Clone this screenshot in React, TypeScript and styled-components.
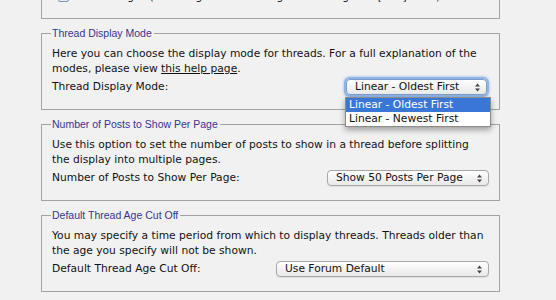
import React from "react"
import styled, { createGlobalStyle, css } from "styled-components"

const GlobalStyle = createGlobalStyle`
  html, body {
    margin: 0;
    background: #f1f1f1;
    overflow: hidden;
  }
  body {
    font-family: "DejaVu Sans", Verdana, sans-serif;
    font-size: 10.7px;
    color: #111;
  }
`

const Page = styled.div`
  width: 459px;
  padding-left: 41px;
  margin-top: -18px;
  display: flex;
  flex-direction: column;
  gap: 7px;
`

const Group = styled.fieldset`
  position: relative;
  margin: 0;
  padding: 6px 10px 14px 10px;
  border: 1px solid #a3a3a3;
  min-width: 0;
`

const Legend = styled.legend`
  font-family: "Liberation Sans", Arial, sans-serif;
  font-size: 10.5px;
  line-height: 14px;
  color: #35358f;
  padding: 0 2px 0 1px;
  margin-left: -1px;
`

const Text = styled.p`
  margin: 0;
  line-height: 15px;
`

const HelpLink = styled.a`
  color: inherit;
  text-decoration: underline;
`

const Row = styled.div`
  display: flex;
  align-items: center;
  justify-content: space-between;
  height: 18px;
  margin-top: 1px;
`

const CheckRow = styled.div`
  display: flex;
  align-items: center;
  gap: 6px;
  padding-left: 6px;
  line-height: 15px;
`

const Check = styled.span`
  width: 9px;
  height: 9px;
  border: 1px solid #7d94b4;
  border-radius: 2px;
  background: linear-gradient(#fff, #e3e9f1);
`

const SelectBox = styled.div<{ $width: number; $focused?: boolean }>`
  position: relative;
  width: ${(p) => p.$width}px;
  height: 16px;
  box-sizing: border-box;
  border: 1px solid #a8a8a8;
  border-radius: 4px;
  background: linear-gradient(#ffffff, #f3f3f3 50%, #e9e9e9);
  box-shadow: 0 1px 1px rgba(0, 0, 0, 0.08);
  display: flex;
  align-items: center;
  padding-left: 8px;
  line-height: 14px;
  margin-top: 2px;
  ${(p) =>
    p.$focused &&
    css`
      margin-right: 2px;
      border-color: #7e9cc8;
      box-shadow: 0 0 0 2px #8db5e6, 0 0 2px 3px rgba(120, 160, 220, 0.4);
    `}
`

const Arrows = styled.svg`
  position: absolute;
  right: 6px;
  top: 3px;
`

const Menu = styled.ul`
  position: absolute;
  z-index: 2;
  left: -2px;
  top: 17px;
  width: 144px;
  margin: 0;
  padding: 0;
  list-style: none;
  background: #fff;
  border: 1px solid #8c8c8c;
  box-shadow: 0 3px 6px rgba(0, 0, 0, 0.35);
`

const MenuItem = styled.li<{ $active?: boolean }>`
  height: 14px;
  line-height: 14px;
  padding-left: 3px;
  ${(p) =>
    p.$active &&
    css`
      background: #3a76d6;
      color: #fff;
    `}
`

function Select({
  value,
  width,
  focused,
  options,
}: {
  value: string
  width: number
  focused?: boolean
  options?: string[]
}) {
  return (
    <SelectBox $width={width} $focused={focused}>
      {value}
      <Arrows width="5" height="9" viewBox="0 0 5 9">
        <path d="M0 3.5 L2.5 0.5 L5 3.5 Z M0 5.5 L2.5 8.5 L5 5.5 Z" fill="#444" />
      </Arrows>
      {options && (
        <Menu>
          {options.map((o) => (
            <MenuItem key={o} $active={o === value}>
              {o}
            </MenuItem>
          ))}
        </Menu>
      )}
    </SelectBox>
  )
}

export default function App() {
  return (
    <>
      <GlobalStyle />
      <Page>
        <Group>
          <CheckRow>
            <Check />
            Show images (including attached images and images in [IMG] code)
          </CheckRow>
        </Group>

        <Group>
          <Legend>Thread Display Mode</Legend>
          <Text>
            Here you can choose the display mode for threads. For a full explanation of the
          </Text>
          <Text>
            modes, please view <HelpLink href="#">this help page</HelpLink>.
          </Text>
          <Row>
            <span>Thread Display Mode:</span>
            <Select
              value="Linear - Oldest First"
              width={141}
              focused
              options={["Linear - Oldest First", "Linear - Newest First"]}
            />
          </Row>
        </Group>

        <Group>
          <Legend>Number of Posts to Show Per Page</Legend>
          <Text>
            Use this option to set the number of posts to show in a thread before splitting
          </Text>
          <Text>the display into multiple pages.</Text>
          <Row>
            <span>Number of Posts to Show Per Page:</span>
            <Select value="Show 50 Posts Per Page" width={162} />
          </Row>
        </Group>

        <Group>
          <Legend>Default Thread Age Cut Off</Legend>
          <Text>
            You may specify a time period from which to display threads. Threads older than
          </Text>
          <Text>the age you specify will not be shown.</Text>
          <Row>
            <span>Default Thread Age Cut Off:</span>
            <Select value="Use Forum Default" width={213} />
          </Row>
        </Group>
      </Page>
    </>
  )
}
